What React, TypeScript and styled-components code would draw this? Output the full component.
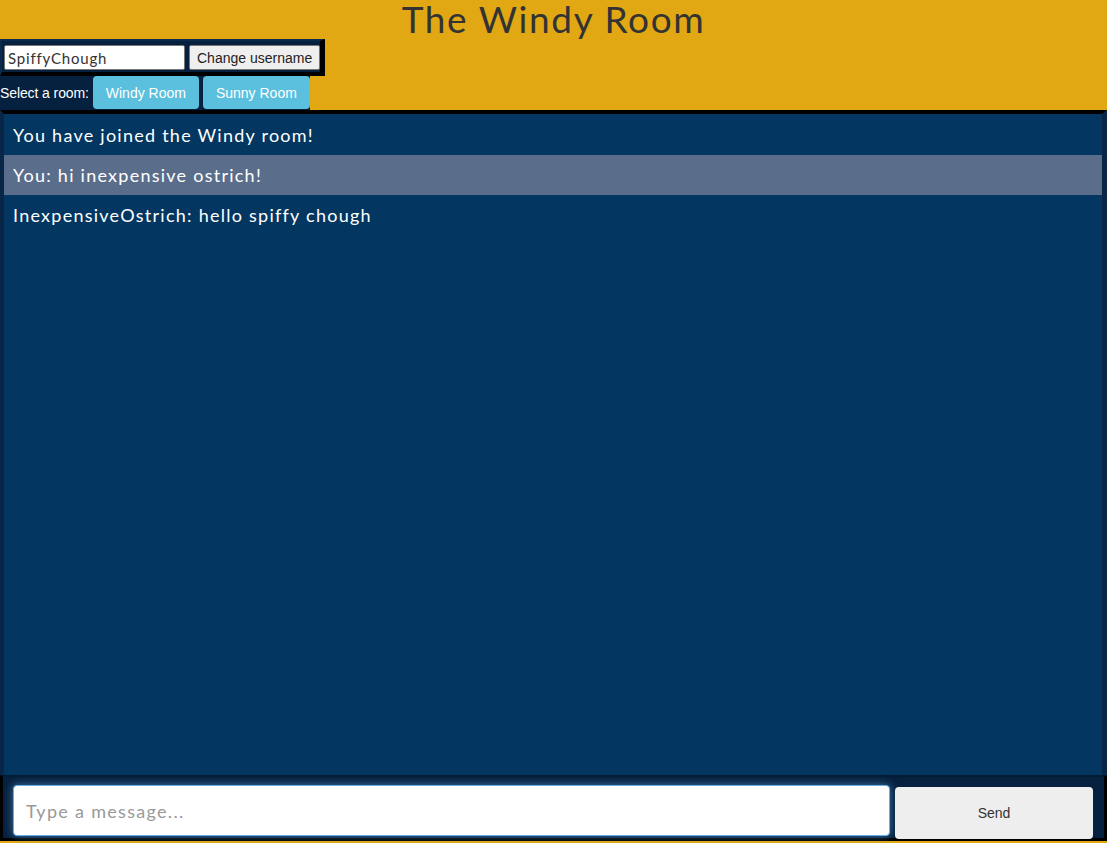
import React from "react";
import styled, { createGlobalStyle } from "styled-components";

const GlobalStyle = createGlobalStyle`
  html, body { margin: 0; padding: 0; }
  body {
    background: #e1a813;
    font-family: "Liberation Sans", Arial, sans-serif;
  }
  * { box-sizing: border-box; }
`;

const roundFont = `"Lato", "Noto Sans", sans-serif`;

const Page = styled.div`
  min-height: 100vh;
  display: flex;
  flex-direction: column;
  padding-bottom: 2px;
  background: #e1a813;
`;

const Title = styled.h1`
  margin: 0;
  height: 39px;
  line-height: 38px;
  text-align: center;
  font-family: ${roundFont};
  font-weight: 400;
  font-size: 37px;
  letter-spacing: 1.6px;
  color: #333;
  overflow: visible;
`;

const Controls = styled.div`
  display: flex;
  flex-direction: column;
  align-items: flex-start;
`;

const UserBox = styled.div`
  display: flex;
  align-items: center;
  gap: 4px;
  background: #06213f;
  border-style: solid;
  border-width: 2px 5px 4px 2px;
  border-color: #0a2b4e #000 #000 #0a2b4e;
  padding: 4px 0 2px 2px;
`;

const NameInput = styled.input`
  width: 181px;
  height: 25px;
  border: 1px solid #767676;
  border-radius: 2px;
  padding: 0 3px;
  font-family: ${roundFont};
  font-size: 15px;
  letter-spacing: 0.8px;
  color: #333;
  background: #fff;
`;

const PlainButton = styled.button`
  height: 25px;
  padding: 0 7px;
  border: 1px solid #767676;
  border-radius: 2px;
  background: #efefef;
  font-family: "Liberation Sans", Arial, sans-serif;
  font-size: 14px;
  color: #222;
`;

const RoomRow = styled.div`
  display: flex;
  align-items: center;
  gap: 4px;
  background: #06213f;
  height: 34px;
  padding-bottom: 1px;
`;

const RoomLabel = styled.span`
  color: #fff;
  font-size: 14px;
  letter-spacing: -0.1px;
  font-family: "Liberation Sans", Arial, sans-serif;
`;

const RoomButton = styled.button<{ $w: number }>`
  height: 33px;
  width: ${(p) => p.$w}px;
  border: none;
  border-radius: 4px;
  background: #5bc0de;
  color: #fff;
  font-family: "Liberation Sans", Arial, sans-serif;
  font-size: 14px;
`;

const ChatFrame = styled.div`
  flex: 1;
  display: flex;
  flex-direction: column;
`;

const MessageList = styled.div`
  flex: 1;
  background: #033762;
  border-style: solid;
  border-width: 4px 5px 0 4px;
  border-color: #000 #0a2646 #0a2646 #0a2646;
  padding-top: 1px;
`;

const Message = styled.div<{ $highlight?: boolean }>`
  height: 40px;
  line-height: 40px;
  padding: 0 9px;
  font-family: ${roundFont};
  font-size: 18px;
  letter-spacing: 1.25px;
  color: #fff;
  background: ${(p) => (p.$highlight ? "#5a6e8c" : "transparent")};
`;

const Form = styled.form`
  display: flex;
  gap: 5px;
  background: #06213f;
  border-style: solid;
  border-width: 2px 3px 3px 3px;
  border-color: #051b33 #000 #000 #000;
  padding: 8px 11px 0 10px;
  height: 66px;
`;

const MessageInput = styled.input`
  flex: 1;
  height: 51px;
  border: 1px solid #66afe9;
  border-radius: 4px;
  box-shadow: 0 0 8px rgba(102, 175, 233, 0.6);
  padding: 0 12px;
  font-family: ${roundFont};
  font-size: 18px;
  letter-spacing: 1.3px;
  color: #333;
  outline: none;
  background: #fff;
  &::placeholder { color: #999; }
`;

const SendButton = styled.button`
  width: 198px;
  height: 52px;
  margin-top: 2px;
  border: none;
  border-radius: 4px;
  background: #eee;
  color: #333;
  font-family: "Liberation Sans", Arial, sans-serif;
  font-size: 14px;
`;

const messages = [
  { text: "You have joined the Windy room!", mine: false },
  { text: "You: hi inexpensive ostrich!", mine: true },
  { text: "InexpensiveOstrich: hello spiffy chough", mine: false },
];

export default function App() {
  return (
    <>
      <GlobalStyle />
      <Page>
        <Title>The Windy Room</Title>
        <Controls>
          <UserBox>
            <NameInput defaultValue="SpiffyChough" />
            <PlainButton>Change username</PlainButton>
          </UserBox>
          <RoomRow>
            <RoomLabel>Select a room:</RoomLabel>
            <RoomButton $w={106}>Windy Room</RoomButton>
            <RoomButton $w={107}>Sunny Room</RoomButton>
          </RoomRow>
        </Controls>
        <ChatFrame>
          <MessageList>
            {messages.map((m, i) => (
              <Message key={i} $highlight={m.mine}>
                {m.text}
              </Message>
            ))}
          </MessageList>
          <Form onSubmit={(e) => e.preventDefault()}>
            <MessageInput placeholder="Type a message..." />
            <SendButton type="submit">Send</SendButton>
          </Form>
        </ChatFrame>
      </Page>
    </>
  );
}
